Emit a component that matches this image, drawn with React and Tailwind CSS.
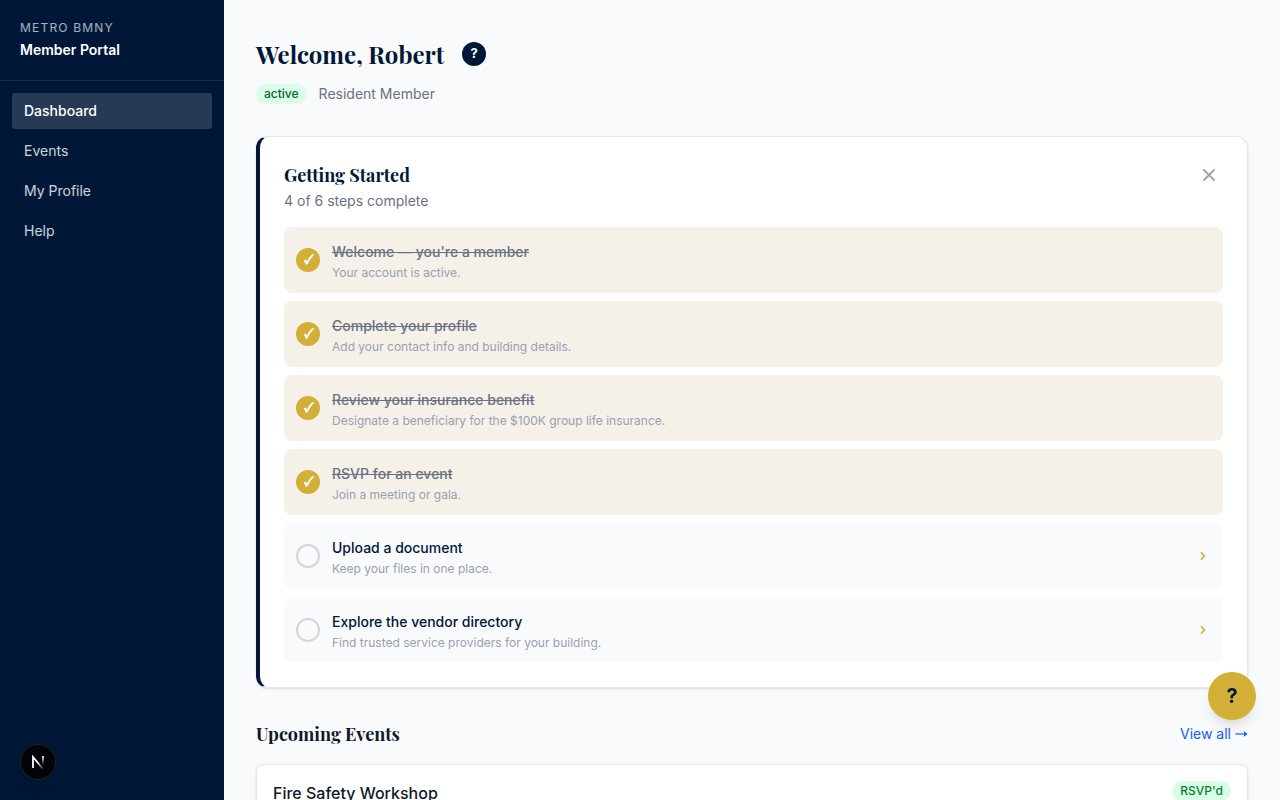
import React, { useState } from 'react';

const NAV_ITEMS = ['Dashboard', 'Events', 'My Profile', 'Help'];

const STEPS = [
  { title: "Welcome — you're a member", text: 'Your account is active.', done: true },
  { title: 'Complete your profile', text: 'Add your contact info and building details.', done: true },
  { title: 'Review your insurance benefit', text: 'Designate a beneficiary for the $100K group life insurance.', done: true },
  { title: 'RSVP for an event', text: 'Join a meeting or gala.', done: true },
  { title: 'Upload a document', text: 'Keep your files in one place.', done: false },
  { title: 'Explore the vendor directory', text: 'Find trusted service providers for your building.', done: false },
];

const Sidebar = () => (
  <aside className="sticky top-0 h-screen w-56 shrink-0 bg-[#001738] text-white">
    <div className="border-b border-white/10 p-5">
      <p className="text-xs uppercase tracking-widest text-white/65">Metro BMNY</p>
      <p className="mt-1 text-sm font-semibold">Member Portal</p>
    </div>
    <nav className="flex flex-col gap-1 p-3">
      {NAV_ITEMS.map((item) => (
        <a
          key={item}
          href="#"
          className={`rounded-[3px] px-3 py-2 text-sm ${
            item === 'Dashboard' ? 'bg-white/15 font-medium text-white' : 'text-white/80 hover:bg-white/10'
          }`}
        >
          {item}
        </a>
      ))}
    </nav>
  </aside>
);

const Step = ({ step }) => (
  <li>
    <a
      href="#"
      className={`flex items-center gap-3 rounded-lg p-3 ${step.done ? 'bg-[#f5f0e8]' : 'bg-[#f9fafc]'}`}
    >
      {step.done ? (
        <span className="flex size-6 shrink-0 items-center justify-center rounded-full bg-[#d4af37]">
          <svg viewBox="0 0 24 24" className="size-6" fill="#fff" aria-hidden="true">
            <path d="M7.8 12.4 L9.7 11.4 C10.3 12 10.7 12.8 11 13.6 C12.4 10.4 14.3 7.6 16.5 6.3 L18.6 6.3 C15.7 9.1 13.4 12.4 11.6 16.3 L9.8 16.8 C9.3 15.2 8.6 13.6 7.8 12.4 Z" />
          </svg>
        </span>
      ) : (
        <span className="size-6 shrink-0 rounded-full border-2 border-gray-300" />
      )}
      <div className="flex flex-1 flex-col gap-[3px] pt-[3px]">
        <p className={`text-sm font-medium ${step.done ? 'text-gray-500 line-through' : 'text-[#001738]'}`}>
          {step.title}
        </p>
        <p className="text-xs text-gray-400">{step.text}</p>
      </div>
      {!step.done && (
        <svg viewBox="0 0 8 10" className="mr-1 h-[10px] w-2" fill="none" stroke="#d4af37" strokeWidth="1.7" aria-hidden="true">
          <path d="M2 1.2 L5.4 5 L2 8.8" />
        </svg>
      )}
    </a>
  </li>
);

const GettingStarted = ({ onClose }) => {
  const complete = STEPS.filter((s) => s.done).length;

  return (
    <section className="mt-8 rounded-xl border border-l-4 border-gray-200 border-l-[#001738] bg-white p-6 shadow-sm">
      <div className="flex items-start justify-between">
        <div>
          <h2 className="font-['Playfair_Display','Liberation_Serif',serif] text-lg/7 font-bold text-[#001738]">
            Getting Started
          </h2>
          <p className="mt-0.5 text-sm text-gray-500">
            {complete} of {STEPS.length} steps complete
          </p>
        </div>
        <button type="button" aria-label="Dismiss" onClick={onClose} className="flex size-7 items-center justify-center text-gray-400">
          <svg viewBox="0 0 14 14" className="size-[14px]" fill="none" stroke="currentColor" strokeWidth="2" aria-hidden="true">
            <path d="M1.4 1.4 12.6 12.6 M12.6 1.4 1.4 12.6" />
          </svg>
        </button>
      </div>
      <ul className="mt-4 flex flex-col gap-2">
        {STEPS.map((step) => (
          <Step key={step.title} step={step} />
        ))}
      </ul>
    </section>
  );
};

const App = () => {
  const [showSteps, setShowSteps] = useState(true);

  return (
    <div className="flex min-h-screen bg-[#f9fafc] font-['Inter',sans-serif] text-gray-900">
      <Sidebar />
      <main className="min-w-0 flex-1 px-8 pt-9 pb-8">
        <div className="flex h-9 items-center gap-[18px]">
          <h1 className="font-['Playfair_Display','Liberation_Serif',serif] text-2xl/9 font-bold text-[#001738]">
            Welcome, Robert
          </h1>
          <button type="button" aria-label="About this page" className="flex size-6 items-center justify-center rounded-full bg-[#001738] text-[13px] font-bold text-white">
            ?
          </button>
        </div>
        <div className="mt-3 flex items-center gap-3">
          <span className="rounded-full bg-green-100 px-2 py-0.5 text-xs font-medium text-green-800">active</span>
          <span className="text-sm text-gray-500">Resident Member</span>
        </div>

        {showSteps && <GettingStarted onClose={() => setShowSteps(false)} />}

        <section className="mt-8">
          <div className="flex items-center justify-between">
            <h2 className="font-['Playfair_Display','Liberation_Serif',serif] text-lg/7 font-bold">Upcoming Events</h2>
            <a href="#" className="flex items-center gap-1 text-sm text-blue-600">
              View all
              <svg viewBox="0 0 13 10" className="h-[10px] w-[13px]" aria-hidden="true">
                <path d="M0.5 5H9.5" stroke="currentColor" strokeWidth="1.2" />
                <path d="M8.6 2 L12.6 5 L8.6 8 L9.3 5 Z" fill="currentColor" />
              </svg>
            </a>
          </div>
          <div className="mt-4 flex items-start justify-between rounded-lg border border-gray-200 bg-white p-4 shadow-sm">
            <h3 className="text-base font-medium">Fire Safety Workshop</h3>
            <span className="rounded-full bg-green-100 px-2 py-0.5 text-xs font-medium text-green-700">RSVP'd</span>
          </div>
        </section>
      </main>

      {/* Floating help */}
      <button
        type="button"
        aria-label="Help"
        className="fixed right-6 bottom-20 flex size-12 items-center justify-center rounded-full bg-[#d4af37] text-xl font-bold text-[#001738] shadow-lg"
      >
        ?
      </button>

      {/* Dev tools indicator */}
      <button
        type="button"
        aria-label="Open dev tools"
        className="fixed bottom-5 left-5 flex size-9 items-center justify-center rounded-full border border-[#222] bg-[#02040a] shadow-lg"
      >
        <svg viewBox="0 0 14 14" className="size-[14px]" fill="none" aria-hidden="true">
          <defs>
            <linearGradient id="stem" x1="0" y1="1" x2="0" y2="10" gradientUnits="userSpaceOnUse">
              <stop stopColor="#fff" />
              <stop offset="1" stopColor="#fff" stopOpacity="0" />
            </linearGradient>
            <linearGradient id="diagonal" x1="7" y1="7" x2="13" y2="14" gradientUnits="userSpaceOnUse">
              <stop stopColor="#fff" />
              <stop offset="1" stopColor="#fff" stopOpacity="0" />
            </linearGradient>
          </defs>
          <path d="M2 13V2L12 14" stroke="url(#diagonal)" strokeWidth="1.8" />
          <path d="M12 1V10" stroke="url(#stem)" strokeWidth="1.8" />
        </svg>
      </button>
    </div>
  );
};

export default App;
